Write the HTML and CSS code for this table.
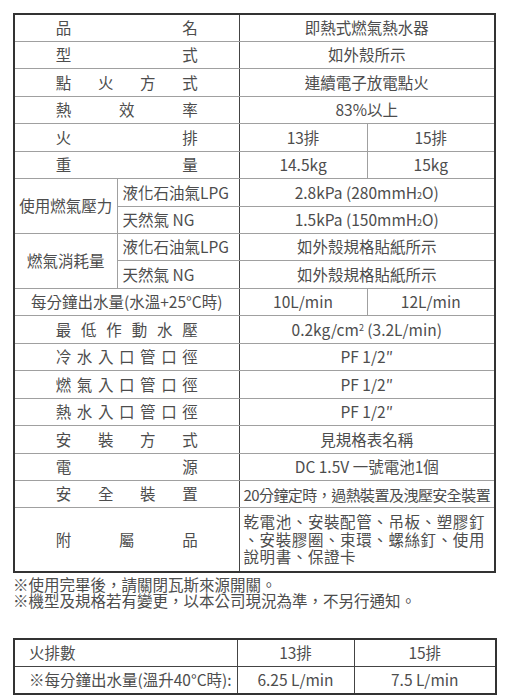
FILE: index.html
```html
<!DOCTYPE html>
<html lang="zh-Hant">
<head>
<meta charset="utf-8">
<title>即熱式燃氣熱水器 規格</title>
<link rel="stylesheet" href="styles.css">
</head>
<body>
<div class="page">
  <table class="spec">
    <colgroup>
      <col class="c1"><col class="c2"><col class="c3"><col class="c4">
    </colgroup>
    <tbody>
      <tr><td colspan="2" class="lab"><div class="j"><span>品</span><span>名</span></div></td><td colspan="2" class="val">即熱式燃氣熱水器</td></tr>
      <tr><td colspan="2" class="lab"><div class="j"><span>型</span><span>式</span></div></td><td colspan="2" class="val">如外殼所示</td></tr>
      <tr><td colspan="2" class="lab"><div class="j"><span>點</span><span>火</span><span>方</span><span>式</span></div></td><td colspan="2" class="val">連續電子放電點火</td></tr>
      <tr><td colspan="2" class="lab"><div class="j"><span>熱</span><span>效</span><span>率</span></div></td><td colspan="2" class="val">83%以上</td></tr>
      <tr><td colspan="2" class="lab"><div class="j"><span>火</span><span>排</span></div></td><td class="val">13排</td><td class="val">15排</td></tr>
      <tr><td colspan="2" class="lab"><div class="j"><span>重</span><span>量</span></div></td><td class="val">14.5kg</td><td class="val">15kg</td></tr>
      <tr class="dk"><td rowspan="2" class="grp">使用燃氣壓力</td><td class="sub">液化石油氣LPG</td><td colspan="2" class="val">2.8kPa (280mmH<span class="small">2</span>O)</td></tr>
      <tr><td class="sub">天然氣 NG</td><td colspan="2" class="val">1.5kPa (150mmH<span class="small">2</span>O)</td></tr>
      <tr class="dk"><td rowspan="2" class="grp">燃氣消耗量</td><td class="sub">液化石油氣LPG</td><td colspan="2" class="val">如外殼規格貼紙所示</td></tr>
      <tr><td class="sub">天然氣 NG</td><td colspan="2" class="val">如外殼規格貼紙所示</td></tr>
      <tr class="dk"><td colspan="2" class="lab ctr">每分鐘出水量(水溫+25°C時)</td><td class="val">10L/min</td><td class="val">12L/min</td></tr>
      <tr class="dk"><td colspan="2" class="lab"><div class="j"><span>最</span><span>低</span><span>作</span><span>動</span><span>水</span><span>壓</span></div></td><td colspan="2" class="val">0.2kg/cm<span class="sup">2</span> (3.2L/min)</td></tr>
      <tr><td colspan="2" class="lab"><div class="j"><span>冷</span><span>水</span><span>入</span><span>口</span><span>管</span><span>口</span><span>徑</span></div></td><td colspan="2" class="val">PF 1/2″</td></tr>
      <tr><td colspan="2" class="lab"><div class="j"><span>燃</span><span>氣</span><span>入</span><span>口</span><span>管</span><span>口</span><span>徑</span></div></td><td colspan="2" class="val">PF 1/2″</td></tr>
      <tr><td colspan="2" class="lab"><div class="j"><span>熱</span><span>水</span><span>入</span><span>口</span><span>管</span><span>口</span><span>徑</span></div></td><td colspan="2" class="val">PF 1/2″</td></tr>
      <tr><td colspan="2" class="lab"><div class="j"><span>安</span><span>裝</span><span>方</span><span>式</span></div></td><td colspan="2" class="val">見規格表名稱</td></tr>
      <tr><td colspan="2" class="lab"><div class="j"><span>電</span><span>源</span></div></td><td colspan="2" class="val">DC 1.5V 一號電池1個</td></tr>
      <tr><td colspan="2" class="lab"><div class="j"><span>安</span><span>全</span><span>裝</span><span>置</span></div></td><td colspan="2" class="val tight">20分鐘定時，過熱裝置及洩壓安全裝置</td></tr>
      <tr class="dk tall"><td colspan="2" class="lab"><div class="j"><span>附</span><span>屬</span><span>品</span></div></td><td colspan="2" class="acc"><div class="ln">乾電池、安裝配管、吊板、塑膠釘</div><div class="ln">、安裝膠圈、束環、螺絲釘、使用</div><div class="ln">說明書、保證卡</div></td></tr>
    </tbody>
  </table>

  <div class="notes">
    <p>※使用完畢後，請關閉瓦斯來源開關。</p>
    <p>※機型及規格若有變更，以本公司現況為準，不另行通知。</p>
  </div>

  <table class="flow">
    <colgroup>
      <col class="f1"><col class="f2"><col class="f3">
    </colgroup>
    <tbody>
      <tr><td class="fl">火排數</td><td class="val">13排</td><td class="val">15排</td></tr>
      <tr><td class="fl">※每分鐘出水量(溫升40°C時):</td><td class="val">6.25 L/min</td><td class="val">7.5 L/min</td></tr>
    </tbody>
  </table>
</div>
</body>
</html>
```

FILE: styles.css
```css
html, body {
  margin: 0;
  padding: 0;
  background: #fff;
}

body {
  font-family: "Noto Sans CJK TC", "Noto Sans", sans-serif;
  font-size: 15.5px;
  color: #4d4d4d;
}

.page {
  padding: 13px 0 0 13px;
}

table {
  border-collapse: collapse;
  table-layout: fixed;
}

.spec {
  width: 481px;
  border: 2px solid #333;
}

.spec col.c1 { width: 103px; }
.spec col.c2 { width: 122px; }
.spec col.c3 { width: 128px; }
.spec col.c4 { width: 128px; }

.spec td {
  height: 27.44px;
  padding: 0;
  border: 1px solid #a0a0a0;
  vertical-align: middle;
  line-height: 1;
  box-sizing: border-box;
}

.spec tr.dk td {
  border-top-color: #444;
}

.spec td.lab {
  border-right-color: #444;
}

.spec tr.tall td {
  height: 64px;
}

.j {
  display: flex;
  justify-content: space-between;
  width: 142px;
  margin: 0 auto;
}

.ctr {
  text-align: center;
  white-space: nowrap;
}

.grp {
  text-align: center;
  white-space: nowrap;
  border-bottom-color: #444;
}

.sub {
  padding-left: 5px !important;
  white-space: nowrap;
  border-right-color: #444 !important;
}

.val {
  text-align: center;
  white-space: nowrap;
}

.tight {
  font-size: 15px;
  letter-spacing: -0.55px;
}

.small {
  font-size: 9px;
}

.sup {
  font-size: 9px;
  vertical-align: 5px;
}

.acc {
  padding: 0 0 0 4px !important;
  letter-spacing: 0.6px;
  white-space: nowrap;
}

.acc .ln {
  height: 17.5px;
  line-height: 17.5px;
}

.notes {
  margin: 3px 0 0 0;
}

.notes p {
  margin: 0;
  height: 16.5px;
  line-height: 16.5px;
}

.flow {
  margin-top: 29px;
  width: 482px;
  border: 2px solid #333;
}

.flow col.f1 { width: 223px; }
.flow col.f2 { width: 117px; }
.flow col.f3 { width: 142px; }

.flow td {
  height: 27.5px;
  padding: 0;
  border: 1px solid #444;
  vertical-align: middle;
  line-height: 1;
  box-sizing: border-box;
}

.flow td.fl {
  padding-left: 14px;
  white-space: nowrap;
}
```
